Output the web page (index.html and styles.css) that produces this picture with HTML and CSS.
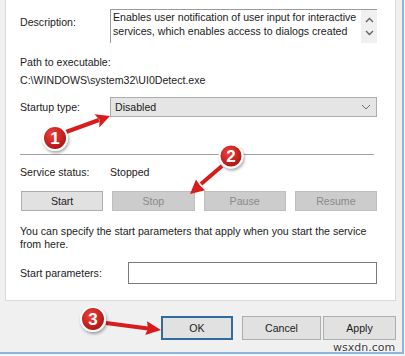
FILE: index.html
```html
<!DOCTYPE html>
<html lang="en">
<head>
  <meta charset="UTF-8" />
  <title>Service Properties</title>
  <link rel="stylesheet" href="styles.css">
</head>
<body>
  <div class="window">
    <!-- tab page -->
    <div class="tab-page">
      <div class="row desc-row">
        <div class="label">Description:</div>
        <div class="desc-box">
          <div class="desc-text">Enables user notification of user input for interactive<br>services, which enables access to dialogs created</div>
          <div class="scroll">
            <svg width="9" height="6" viewBox="0 0 9 6"><path d="M1 5 L4.5 1.5 L8 5" fill="none" stroke="#606060" stroke-width="1.3"/></svg>
            <svg width="9" height="6" viewBox="0 0 9 6"><path d="M1 1 L4.5 4.5 L8 1" fill="none" stroke="#606060" stroke-width="1.3"/></svg>
          </div>
        </div>
      </div>

      <div class="path">
        <div>Path to executable:</div>
        <div>C:\WINDOWS\system32\UI0Detect.exe</div>
      </div>

      <div class="row startup-row">
        <div class="label">Startup type:</div>
        <div class="combo">
          <span>Disabled</span>
          <svg width="10" height="6" viewBox="0 0 10 6"><path d="M1 1 L5 5 L9 1" fill="none" stroke="#707070" stroke-width="1"/></svg>
        </div>
      </div>

      <div class="sep"></div>

      <div class="row status-row">
        <div class="label">Service status:</div>
        <div>Stopped</div>
      </div>

      <div class="svc-buttons">
        <button class="btn">Start</button>
        <button class="btn" disabled>Stop</button>
        <button class="btn" disabled>Pause</button>
        <button class="btn" disabled>Resume</button>
      </div>

      <p class="hint">You can specify the start parameters that apply when you start the service<br>from here.</p>

      <div class="row params-row">
        <div class="label">Start parameters:</div>
        <div class="input"></div>
      </div>
    </div>

    <div class="dialog-buttons">
      <button class="btn ok">OK</button>
      <button class="btn cancel">Cancel</button>
      <button class="btn apply">Apply</button>
    </div>
  </div>

  <!-- red callouts drawn over the dialog -->
  <svg class="marks" width="405" height="356" viewBox="0 0 405 356">
    <defs>
      <radialGradient id="badge" cx="40%" cy="35%" r="70%">
        <stop offset="0" stop-color="#f0413a"/>
        <stop offset="1" stop-color="#a80f10"/>
      </radialGradient>
      <filter id="shadow" x="-30%" y="-30%" width="160%" height="160%">
        <feDropShadow dx="1" dy="2" stdDeviation="1.5" flood-color="#000" flood-opacity="0.35"/>
      </filter>
    </defs>

    <g class="arrow">
      <line x1="66" y1="132" x2="99" y2="120" />
      <polygon points="110,116 99.2,127.4 99.6,119.8 94.4,114.2" />
    </g>
    <g class="arrow">
      <line x1="222" y1="166" x2="201" y2="184" />
      <polygon points="190,194 205.2,190.2 200,185.5 196,179.6" />
    </g>
    <g class="arrow">
      <line x1="106" y1="323" x2="148" y2="328.5" />
      <polygon points="161,330 145.2,335.1 148,328.4 147,321.3" />
    </g>

    <g filter="url(#shadow)">
      <circle cx="55" cy="138" r="12" fill="url(#badge)" stroke="#fff" stroke-width="2"/>
      <circle cx="231" cy="156" r="11.5" fill="url(#badge)" stroke="#fff" stroke-width="2"/>
      <circle cx="93" cy="319" r="12" fill="url(#badge)" stroke="#fff" stroke-width="2"/>
    </g>
    <text x="55" y="144" class="num">1</text>
    <text x="231" y="162" class="num">2</text>
    <text x="93" y="325" class="num">3</text>
  </svg>

  <div class="watermark">wsxdn.com</div>
</body>
</html>
```

FILE: styles.css
```css
body {
  margin: 0;
  width: 405px;
  height: 356px;
  background: #f4f7fa;
  font-family: "Liberation Sans", Arial, sans-serif;
  font-size: 10.6px;
  color: #1b1b1b;
  position: relative;
  overflow: hidden;
}

.window {
  width: 402px;
  height: 352px;
  background: #f0f0f0;
  border-right: 2px solid #8cb6dc;
  border-bottom: 2px solid #8cb6dc;
}

/* white tab page */
.tab-page {
  margin-left: 5px;
  width: 357px;
  background: #fff;
  border: 1px solid #d9d9d9;
  border-top: none;
  padding: 9px 18px 16px 14px;
}

.row {
  display: flex;
  align-items: center;
}
.row .label {
  width: 90px;
  flex: none;
}

.desc-row {
  align-items: flex-start;
}
.desc-row .label {
  margin-top: 7px;
}
.desc-box {
  flex: 1;
  height: 34px;
  display: flex;
  border-top: 1px solid #9a9a9a;
  border-left: 1px solid #9a9a9a;
  box-sizing: border-box;
}
.desc-text {
  flex: 1;
  padding: 1px 0 0 2px;
  line-height: 13.5px;
  white-space: nowrap;
  overflow: hidden;
}
.scroll {
  width: 16px;
  background: #f0f0f0;
  display: flex;
  flex-direction: column;
  align-items: center;
  justify-content: space-around;
  padding: 3px 0;
}

.path {
  margin-top: 10px;
  line-height: 18px;
}

.startup-row {
  margin-top: 8px;
}
.combo {
  flex: 1;
  height: 20px;
  box-sizing: border-box;
  background: #e5e5e5;
  border: 1px solid #acacac;
  display: flex;
  align-items: center;
  justify-content: space-between;
  padding: 0 5px 0 4px;
}

.sep {
  margin: 37px 3px 0 0;
  border-top: 1px solid #a0a0a0;
}

.status-row {
  margin-top: 10px;
  line-height: 14px;
}

.svc-buttons {
  margin-top: 12px;
  margin-left: 1px;
  display: grid;
  grid-template-columns: repeat(4, 1fr);
  gap: 9px;
}

.btn {
  font-family: inherit;
  font-size: inherit;
  color: #1b1b1b;
  height: 20px;
  padding: 0;
  background: #e1e1e1;
  border: 1px solid #adadad;
}
.btn:disabled {
  background: #cccccc;
  border-color: #bfbfbf;
  color: #8a8a8a;
}

.hint {
  margin: 14px 0 0;
  line-height: 13px;
}

.params-row {
  margin-top: 11px;
}
.params-row .label {
  width: 108px;
}
.input {
  flex: 1;
  height: 22px;
  box-sizing: border-box;
  background: #fff;
  border: 1px solid #7a7a7a;
}

.dialog-buttons {
  margin-top: 15px;
  display: flex;
  padding-left: 161px;
}
.dialog-buttons .btn {
  height: 24px;
}
.ok {
  width: 72px;
  border: 2px solid #2f6b9e;
}
.cancel {
  width: 79px;
  margin-left: 9px;
}
.apply {
  width: 73px;
  margin-left: 2px;
}

.marks {
  position: absolute;
  left: 0;
  top: 0;
}
.arrow line {
  stroke: #d81c1c;
  stroke-width: 4;
}
.arrow polygon {
  fill: #d81c1c;
}
.num {
  font-family: "Liberation Sans", Arial, sans-serif;
  font-weight: bold;
  font-size: 17px;
  fill: #fff;
  text-anchor: middle;
}

.watermark {
  position: absolute;
  left: 333px;
  top: 341px;
  font-family: "DejaVu Sans", sans-serif;
  font-size: 11px;
  color: #3a3a3a;
  text-shadow: 0 0 2px #fff, 0 0 2px #fff;
}
```
